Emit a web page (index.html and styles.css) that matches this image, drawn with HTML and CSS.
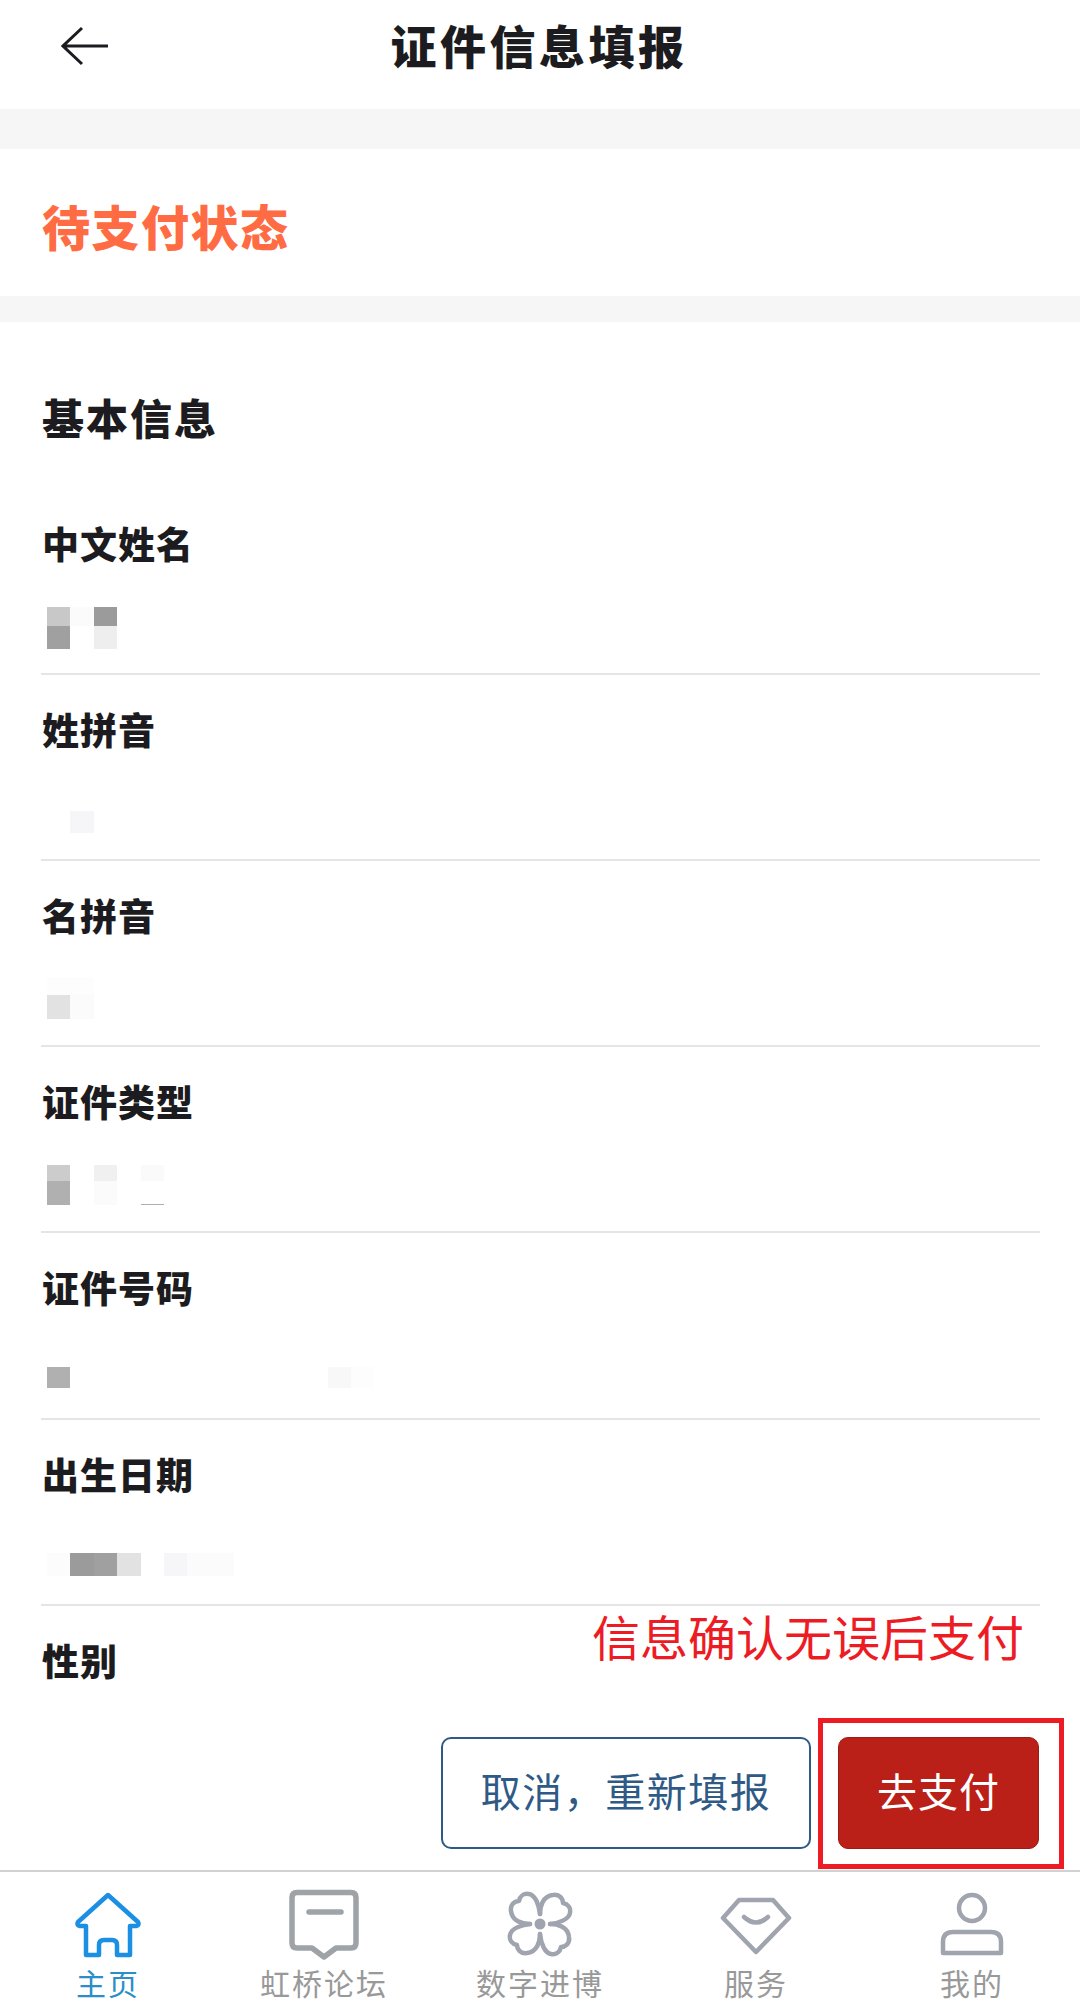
FILE: index.html
```html
<!DOCTYPE html>
<html lang="zh-CN">
<head>
<meta name="viewport" content="width=device-width, initial-scale=1">
<link rel="stylesheet" href="styles.css">
</head>
<body>
<div class="page">

  <div class="header">
    <svg class="back-icon" viewBox="0 0 48 40" fill="none">
      <path d="M21 2 L2 20 L21 38 M2 20 H47" />
    </svg>
    <div class="title">证件信息填报</div>
  </div>

  <div class="status">待支付状态</div>

  <div class="form">
    <div class="form-title">基本信息</div>

    <div class="field">
      <div class="label">中文姓名</div>
      <div class="value">
        <div class="mosaic rows-19-23">
          <i class="s-c8"></i><i class="s-fb"></i><i class="s-9b"></i>
          <i class="s-a0"></i><i></i><i class="s-ee"></i>
        </div>
      </div>
    </div>

    <div class="field">
      <div class="label">姓拼音</div>
      <div class="value">
        <div class="mosaic rows-22">
          <i></i><i class="s-f6"></i>
        </div>
      </div>
    </div>

    <div class="field">
      <div class="label">名拼音</div>
      <div class="value">
        <div class="mosaic rows-18-24">
          <i class="s-fd"></i><i class="s-fd"></i><i></i>
          <i class="s-e2"></i><i class="s-fb"></i><i></i>
        </div>
      </div>
    </div>

    <div class="field">
      <div class="label">证件类型</div>
      <div class="value">
        <div class="mosaic rows-16-24">
          <i class="s-cc"></i><i></i><i class="s-f0"></i><i></i><i class="s-fa"></i>
          <i class="s-b0"></i><i></i><i class="s-fb"></i><i></i><i class="s-line"></i>
        </div>
      </div>
    </div>

    <div class="field field-tall">
      <div class="label">证件号码</div>
      <div class="value">
        <div class="mosaic rows-21">
          <i class="s-b0"></i><i></i><i></i><i></i><i></i><i></i><i></i>
          <i></i><i></i><i></i><i></i><i></i><i class="s-f8"></i><i class="s-fd"></i>
        </div>
      </div>
    </div>

    <div class="field">
      <div class="label">出生日期</div>
      <div class="value">
        <div class="mosaic rows-23">
          <i class="s-fc"></i><i class="s-9b"></i><i class="s-a0"></i><i class="s-e2"></i>
          <i></i><i class="s-f6"></i><i class="s-fb"></i><i class="s-fb"></i>
        </div>
      </div>
    </div>

    <div class="field">
      <div class="label">性别</div>
    </div>
  </div>

  <div class="actions">
    <button class="btn btn-cancel">取消，重新填报</button>
    <button class="btn btn-pay">去支付</button>
  </div>

  <div class="nav">
    <div class="nav-item active">
      <svg class="nav-icon" viewBox="0 0 72 72" fill="none">
        <path d="M36 7 L66 34 Q68 37 64 38 L58 38 V67 H45 V57 Q45 52 40 52 H32 Q27 52 27 57 V67 H14 V38 H8 Q4 37 6 34 Z" />
      </svg>
      <span>主页</span>
    </div>
    <div class="nav-item">
      <svg class="nav-icon icon-thick" viewBox="0 0 72 72" fill="none">
        <path d="M9 4.500 H63 Q68 4.500 68 9.500 V55 Q68 60 63 60 H48 L36 69 L24 60 H9 Q4 60 4 55 V9.500 Q4 4.500 9 4.500 Z" />
        <path d="M21 24 H53" />
      </svg>
      <span>虹桥论坛</span>
    </div>
    <div class="nav-item">
      <svg class="nav-icon" viewBox="-36 -36 72 72" fill="none">
        <path id="petal" d="M0 -10 C0 -18 3 -28 13 -29 C20 -30 23 -25 23 -21 C28 -20 31 -16 30 -11 C29 -5 20 -1 10 0" />
        <use href="#petal" transform="rotate(90)" />
        <use href="#petal" transform="rotate(180)" />
        <use href="#petal" transform="rotate(270)" />
        <circle class="nav-dot" cx="0" cy="0" r="5.500" />
      </svg>
      <span>数字进博</span>
    </div>
    <div class="nav-item">
      <svg class="nav-icon" viewBox="0 0 72 72" fill="none">
        <path d="M19 12 H53 L69 30 L36 64 L3 30 Z" />
        <path d="M24 29 Q36 40 48 29" />
      </svg>
      <span>服务</span>
    </div>
    <div class="nav-item">
      <svg class="nav-icon" viewBox="0 0 72 72" fill="none">
        <circle cx="36" cy="20" r="13" />
        <path d="M7 65 V54 Q7 44 17 44 H55 Q65 44 65 54 V65 Z" />
      </svg>
      <span>我的</span>
    </div>
  </div>

  <!-- red annotation drawn over the screenshot -->
  <div class="note">信息确认无误后支付</div>
  <div class="note-box"></div>
</div>
</body>
</html>
```

FILE: styles.css
```css
* {
  box-sizing: border-box;
}

body {
  margin: 0;
  background-color: #fff;
  font-family: "Noto Sans CJK SC", "Noto Sans", sans-serif;
  color: #1c1c20;
}

.page {
  position: relative;
  display: flex;
  flex-direction: column;
  width: 1080px;
  height: 2016px;
  overflow: hidden;
}

/* header */
.header {
  position: relative;
  display: flex;
  align-items: center;
  justify-content: center;
  height: 109px;
  padding-bottom: 21px;
}

.back-icon {
  position: absolute;
  left: 61px;
  top: 26px;
  width: 48px;
  height: 40px;
}

.back-icon path {
  stroke: #1c1c20;
  stroke-width: 3;
}

.title {
  font-size: 46px;
  line-height: 60px;
  font-weight: 900;
  letter-spacing: 3.500px;
  margin-left: -2px;
}

/* status */
.status {
  display: flex;
  align-items: center;
  height: 213px;
  padding: 4px 0 0 42px;
  border-top: 40px solid #f6f6f6;
  border-bottom: 26px solid #f6f6f6;
  color: #ff6b42;
  font-size: 48px;
  font-weight: 900;
  letter-spacing: 1.500px;
}

/* form */
.form {
  flex: 1;
  overflow: hidden;
}

.form-title {
  height: 167px;
  padding: 65px 0 0 42px;
  font-size: 42px;
  line-height: 60px;
  font-weight: 900;
  letter-spacing: 2px;
}

.field {
  display: flex;
  flex-direction: column;
  height: 186px;
  margin: 0 40px 0 41px;
  padding-top: 29px;
  border-bottom: 2px solid #e5e5e5;
}

.field-tall {
  height: 187px;
}

.label {
  height: 50px;
  padding-left: 1px;
  font-size: 37px;
  line-height: 50px;
  font-weight: 900;
  letter-spacing: 1px;
}

.value {
  display: flex;
  align-items: flex-end;
  height: 79px;
  padding-left: 6px;
}

/* blurred-out values */
.mosaic {
  display: grid;
  width: 100%;
}

.mosaic i {
  display: block;
}

.rows-19-23 {
  grid-template-columns: repeat(3, 23.400px);
  grid-template-rows: 19px 23px;
  margin-bottom: -2px;
}

.rows-22 {
  grid-template-columns: repeat(2, 23.400px);
  grid-template-rows: 22px;
}

.rows-18-24 {
  grid-template-columns: repeat(3, 23.400px);
  grid-template-rows: 18px 24px;
}

.rows-16-24 {
  grid-template-columns: repeat(5, 23.400px);
  grid-template-rows: 16px 24px;
}

.rows-21 {
  grid-template-columns: repeat(14, 23.400px);
  grid-template-rows: 21px;
  margin-bottom: 3px;
}

.rows-23 {
  grid-template-columns: repeat(8, 23.400px);
  grid-template-rows: 23px;
  margin-bottom: 2px;
}

.s-9b { background-color: #9b9b9b; }
.s-a0 { background-color: #a0a0a0; }
.s-b0 { background-color: #b0b0b0; }
.s-c8 { background-color: #c8c8c8; }
.s-cc { background-color: #cccccc; }
.s-e2 { background-color: #e2e2e2; }
.s-ee { background-color: #eeeeee; }
.s-f0 { background-color: #f0f0f0; }
.s-f6 { background-color: #f6f6f8; }
.s-f8 { background-color: #f8f8f8; }
.s-fa { background-color: #fafafa; }
.s-fb { background-color: #fbfbfb; }
.s-fc { background-color: #fcfcfc; }
.s-fd { background-color: #fdfdfd; }
.s-line { border-bottom: 1px solid #b0b0b0; }

/* buttons */
.actions {
  display: flex;
  justify-content: flex-end;
  gap: 27px;
  height: 172px;
  padding: 37px 41px 0 0;
  background-color: #fff;
  border-bottom: 2px solid #d2d2d2;
}

.btn {
  height: 112px;
  border-radius: 10px;
  font-family: inherit;
  font-size: 40px;
  padding: 0 0 6px;
}

.btn-cancel {
  width: 370px;
  border: 2px solid #2f5a85;
  background-color: #fff;
  color: #2f5a85;
  letter-spacing: 1.500px;
}

.btn-pay {
  width: 201px;
  border: 1px solid #9e1a14;
  background-color: #bb2018;
  color: #fff;
  letter-spacing: 1px;
}

/* bottom nav */
.nav {
  display: grid;
  grid-template-columns: repeat(5, 1fr);
  height: 144px;
  padding-top: 16px;
  background-color: #fff;
}

.nav-item {
  display: flex;
  flex-direction: column;
  align-items: center;
  gap: 4px;
  color: #999;
  font-size: 30px;
  line-height: 36px;
  letter-spacing: 2px;
}

.nav-item.active {
  color: #2a8fc9;
}

.nav-icon {
  display: block;
  width: 72px;
  height: 72px;
}

.nav-icon path,
.nav-icon circle,
.nav-icon use {
  stroke: #a0a4ae;
  stroke-width: 4.500;
  stroke-linejoin: round;
  stroke-linecap: round;
}

.icon-thick path {
  stroke: #9ea3a8;
  stroke-width: 5.500;
}

.nav-icon .nav-dot {
  fill: #a0a4ae;
  stroke: none;
}

.active .nav-icon path {
  stroke: #1a8fe3;
}

/* annotation */
.note {
  position: absolute;
  left: 592px;
  top: 1601px;
  color: #ed1c24;
  font-size: 48px;
  line-height: 68px;
  white-space: nowrap;
}

.note-box {
  position: absolute;
  left: 818px;
  top: 1718px;
  width: 246px;
  height: 151px;
  border: 5px solid #ed1c24;
}
```
